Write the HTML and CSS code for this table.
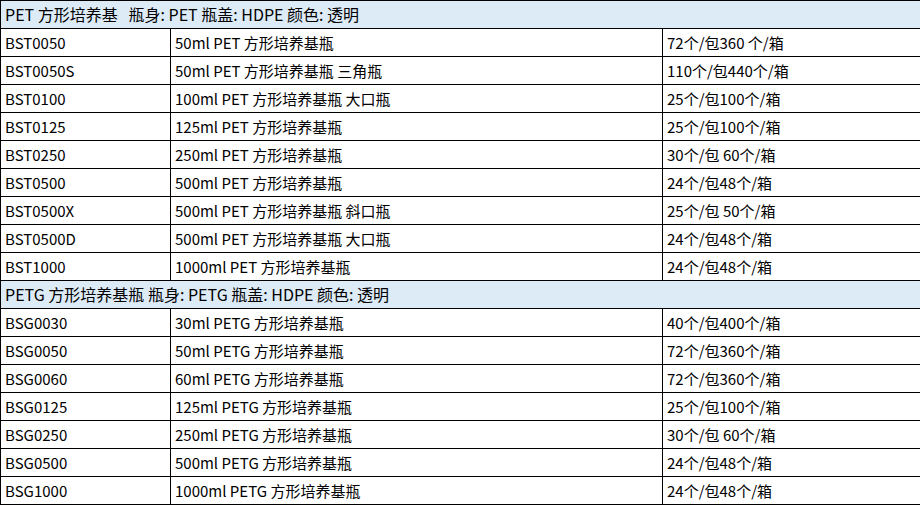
FILE: index.html
```html
<!DOCTYPE html>
<html lang="zh">
<head>
<meta charset="utf-8">
<link rel="stylesheet" href="styles.css">
</head>
<body>
<table class="spec">
<colgroup><col class="c1"><col class="c2"><col class="c3"></colgroup>
<tbody>
<tr class="group"><td colspan="3">PET 方形培养基&nbsp;&nbsp; 瓶身: PET 瓶盖: HDPE 颜色: 透明</td></tr>
<tr><td>BST0050</td><td>50ml PET 方形培养基瓶</td><td>72个/包360 个/箱</td></tr>
<tr><td>BST0050S</td><td>50ml PET 方形培养基瓶 三角瓶</td><td>110个/包440个/箱</td></tr>
<tr><td>BST0100</td><td>100ml PET 方形培养基瓶 大口瓶</td><td>25个/包100个/箱</td></tr>
<tr><td>BST0125</td><td>125ml PET 方形培养基瓶</td><td>25个/包100个/箱</td></tr>
<tr><td>BST0250</td><td>250ml PET 方形培养基瓶</td><td>30个/包 60个/箱</td></tr>
<tr><td>BST0500</td><td>500ml PET 方形培养基瓶</td><td>24个/包48个/箱</td></tr>
<tr><td>BST0500X</td><td>500ml PET 方形培养基瓶 斜口瓶</td><td>25个/包 50个/箱</td></tr>
<tr><td>BST0500D</td><td>500ml PET 方形培养基瓶 大口瓶</td><td>24个/包48个/箱</td></tr>
<tr><td>BST1000</td><td>1000ml PET 方形培养基瓶</td><td>24个/包48个/箱</td></tr>
<tr class="group"><td colspan="3">PETG 方形培养基瓶 瓶身: PETG 瓶盖: HDPE 颜色: 透明</td></tr>
<tr><td>BSG0030</td><td>30ml PETG 方形培养基瓶</td><td>40个/包400个/箱</td></tr>
<tr><td>BSG0050</td><td>50ml PETG 方形培养基瓶</td><td>72个/包360个/箱</td></tr>
<tr><td>BSG0060</td><td>60ml PETG 方形培养基瓶</td><td>72个/包360个/箱</td></tr>
<tr><td>BSG0125</td><td>125ml PETG 方形培养基瓶</td><td>25个/包100个/箱</td></tr>
<tr><td>BSG0250</td><td>250ml PETG 方形培养基瓶</td><td>30个/包 60个/箱</td></tr>
<tr><td>BSG0500</td><td>500ml PETG 方形培养基瓶</td><td>24个/包48个/箱</td></tr>
<tr><td>BSG1000</td><td>1000ml PETG 方形培养基瓶</td><td>24个/包48个/箱</td></tr>
</tbody>
</table>
</body>
</html>
```
FILE: styles.css
```css
html, body {
  margin: 0;
  padding: 0;
  background: #ffffff;
}
.spec {
  border-collapse: collapse;
  width: 920px;
  table-layout: fixed;
  font-family: "Noto Sans CJK SC", "Noto Sans", sans-serif;
  font-size: 15px;
  color: #000000;
}
.c1 { width: 170px; }
.c2 { width: 492px; }
.c3 { width: 258px; }
.spec td {
  border: 1px solid #000000;
  height: 27px;
  padding: 0 0 0 4px;
  line-height: 27px;
  white-space: nowrap;
  overflow: hidden;
  box-sizing: border-box;
}
.spec tr {
  height: 28px;
}
.spec .group td {
  background: #ddebf7;
  font-size: 16px;
}
```
